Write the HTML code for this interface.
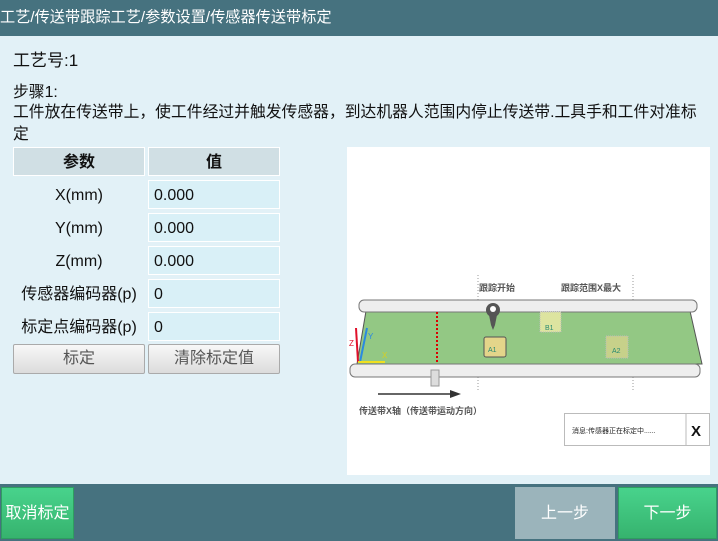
<html><head><style>
body{margin:0;width:718px;height:541px;background:#e2f1f7;font-family:"Liberation Sans","Noto Sans CJK SC",sans-serif;position:relative;overflow:hidden}
.hd{position:absolute;left:0;top:0;width:718px;height:36px;background:#46727f;color:#fff;font-size:15.2px;line-height:36px;white-space:nowrap}
.t{position:absolute;font-size:15.8px;color:#111;white-space:nowrap;line-height:18px}
.c{position:absolute;height:29px;line-height:29px;font-size:16px;color:#111;white-space:nowrap}
.h{background:#d0dfe4;border:1px solid #fff;font-weight:bold;text-align:center;box-sizing:border-box}
.v{background:#d9f0f7;border:1px solid #fff;box-sizing:border-box;padding-left:5px}
.l{text-align:center}
.b{position:absolute;top:344px;height:30px;line-height:28px;text-align:center;font-size:16px;color:#555;background:linear-gradient(#f8f8f8,#dcdcdc);border:1px solid #aaa;box-sizing:border-box;border-radius:2px}
.ft{position:absolute;left:0;top:484px;width:718px;height:57px;background:#46727f}
.g{position:absolute;top:487px;height:52px;line-height:52px;text-align:center;color:#fff;font-size:16px;background:linear-gradient(#48d38c,#36b36e);border:1px solid #2e9e60;box-sizing:border-box}
</style></head><body>
<div class="hd">工艺/传送带跟踪工艺/参数设置/传感器传送带标定</div>
<div class="t" style="left:13px;top:52px;font-size:17px">工艺号:1</div>
<div class="t" style="left:13px;top:84px">步骤1:</div>
<div class="t" style="left:13px;top:104px">工件放在传送带上，使工件经过并触发传感器，到达机器人范围内停止传送带.工具手和工件对准标</div>
<div class="t" style="left:13px;top:126px">定</div>
<div class="c h" style="left:13px;top:147px;width:132px">参数</div>
<div class="c h" style="left:148px;top:147px;width:132px">值</div>
<div class="c l" style="left:13px;top:181px;width:132px">X(mm)</div><div class="c v" style="left:148px;top:180px;width:132px">0.000</div>
<div class="c l" style="left:13px;top:214px;width:132px">Y(mm)</div><div class="c v" style="left:148px;top:213px;width:132px">0.000</div>
<div class="c l" style="left:13px;top:247px;width:132px">Z(mm)</div><div class="c v" style="left:148px;top:246px;width:132px">0.000</div>
<div class="c l" style="left:13px;top:280px;width:132px">传感器编码器(p)</div><div class="c v" style="left:148px;top:279px;width:132px">0</div>
<div class="c l" style="left:13px;top:313px;width:132px">标定点编码器(p)</div><div class="c v" style="left:148px;top:312px;width:132px">0</div>
<div class="b" style="left:13px;width:132px">标定</div>
<div class="b" style="left:148px;width:132px">清除标定值</div>
<svg style="position:absolute;left:347px;top:147px" width="363" height="328" viewBox="347 147 363 328">
<rect x="347" y="147" width="363" height="328" fill="#fff"/>
<line x1="478" y1="275" x2="478" y2="392" stroke="#999" stroke-dasharray="1,2"/>
<line x1="633" y1="275" x2="633" y2="392" stroke="#999" stroke-dasharray="1,2"/>
<text x="479" y="291" font-size="9" font-weight="bold" fill="#555">跟踪开始</text>
<text x="561" y="291" font-size="9" font-weight="bold" fill="#555">跟踪范围X最大</text>
<polygon points="366,311 690,311 702,364 357,364" fill="#93c884" stroke="#555"/>
<rect x="359" y="300" width="338" height="12" rx="5" fill="#eee" stroke="#777"/>
<rect x="350" y="364" width="350" height="13" rx="5" fill="#eee" stroke="#777"/>
<line x1="437" y1="312" x2="437" y2="363" stroke="#d00" stroke-width="2" stroke-dasharray="2,2"/>
<circle cx="493" cy="310" r="7" fill="#555"/><circle cx="493" cy="309" r="3" fill="#fff"/>
<polygon points="489,315 497,315 495,325 493,330 491,325" fill="#555"/>
<rect x="484" y="337" width="22" height="20" rx="2" fill="#e4d58a" stroke="#555"/>
<text x="488" y="352" font-size="7" fill="#2a8a70">A1</text>
<rect x="540" y="312" width="21" height="20" fill="#dde4a0" stroke="#bbb" stroke-dasharray="1,1"/>
<text x="545" y="330" font-size="7" fill="#2a8a70">B1</text>
<rect x="606" y="336" width="22" height="22" fill="#c7d18a" stroke="#bbb" stroke-dasharray="1,1"/>
<text x="612" y="353" font-size="7" fill="#2a8a70">A2</text>
<line x1="358" y1="362" x2="356" y2="328" stroke="#e0102a" stroke-width="2"/>
<line x1="360" y1="362" x2="367" y2="328" stroke="#2a8ae0" stroke-width="2"/>
<line x1="358" y1="362" x2="385" y2="362" stroke="#f0e020" stroke-width="2"/>
<text x="349" y="346" font-size="8" fill="#e0102a">Z</text><text x="368" y="339" font-size="8" fill="#2a8ae0">Y</text><text x="382" y="358" font-size="8" fill="#d8d020">X</text>
<rect x="431" y="370" width="8" height="16" fill="#ddd" stroke="#999"/>
<line x1="378" y1="394" x2="452" y2="394" stroke="#333" stroke-width="1.5"/>
<polygon points="450,390 461,394 450,398" fill="#333"/>
<text x="359" y="414" font-size="9" font-weight="bold" fill="#555">传送带X轴（传送带运动方向）</text>
<rect x="564.5" y="413.5" width="145" height="32" fill="#fff" stroke="#bbb"/>
<line x1="686" y1="414" x2="686" y2="445" stroke="#bbb"/>
<text x="572" y="433" font-size="7" fill="#222">消息:传感器正在标定中......</text>
<text x="691" y="436" font-size="15" font-weight="bold" fill="#111">X</text>
</svg>
<div class="ft"></div>
<div class="g" style="left:1px;width:73px">取消标定</div>
<div class="g" style="left:515px;width:100px;background:#9bb4bb;border-color:#9bb4bb">上一步</div>
<div class="g" style="left:618px;width:99px">下一步</div>
</body></html>
